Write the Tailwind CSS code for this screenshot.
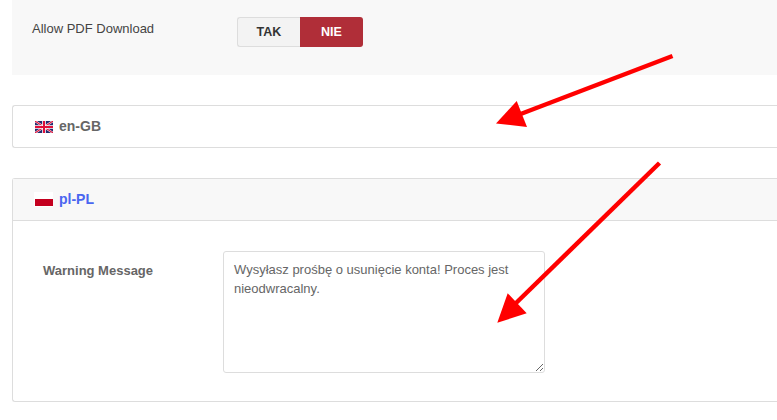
<!DOCTYPE html>
<html lang="en">
<head>
    <meta charset="UTF-8">
    <title>Document</title>
    <script src="https://cdn.jsdelivr.net/npm/@tailwindcss/browser@4"></script>
</head>
<body class="bg-white">
<div class="relative w-[777px] h-[420px] overflow-hidden pl-3 font-['Liberation_Sans',Arial,sans-serif] text-[#555]">

  <!-- Allow PDF -->
  <div class="w-[800px] h-[75px] bg-[#f8f8f8] flex items-start pl-5 pt-[17px]">
    <div class="w-[205px] text-[13px] leading-[23px] text-[#444]">Allow PDF Download</div>
    <div class="flex h-[30px] text-[12.5px] font-bold">
      <div class="w-[63px] flex items-center justify-center bg-[#f3f3f3] text-[#333] border border-[#ddd] border-r-0 rounded-l-[3px]">TAK</div>
      <div class="w-[63px] flex items-center justify-center bg-[#b02e38] text-white rounded-r-[3px]">NIE</div>
    </div>
  </div>

  <!-- en-GB -->
  <div class="mt-[30px] w-[800px] h-[43px] border border-[#ddd] border-r-0 rounded-[3px] flex items-center pl-[22px] text-[14px] font-bold text-[#666]">
    <svg class="w-[18px] h-[12px] mr-1.5 mt-px" viewBox="0 0 60 40">
      <rect width="60" height="40" fill="#23296e"/>
      <path d="M0 0L60 40M60 0L0 40" stroke="#fff" stroke-width="7"/>
      <path d="M0 0L60 40M60 0L0 40" stroke="#e0103a" stroke-width="3.5"/>
      <path d="M30 0V40M0 20H60" stroke="#fff" stroke-width="12"/>
      <path d="M30 0V40M0 20H60" stroke="#e0103a" stroke-width="6.67"/>
    </svg>
    <span>en-GB</span>
  </div>

  <!-- pl-PL -->
  <div class="mt-[30px] w-[800px] h-[224px] border border-[#ddd] border-r-0 rounded-[3px]">
    <div class="h-[42px] bg-[#f8f8f8] border-b border-[#ddd] flex items-center pl-[21px] text-[14px] font-bold text-[#4a66f0]">
      <svg class="w-[19px] h-[15px] mr-1.5" viewBox="0 0 19 15">
        <rect width="19" height="15" fill="#fff"/>
        <rect x="1" y="7" width="18" height="7" fill="#c4001f"/>
      </svg>
      <span>pl-PL</span>
    </div>
    <div class="flex pl-[30px] pt-[30px]">
      <div class="w-[180px] pt-[11px] text-[13px] leading-[18px] font-bold text-[#666]">Warning Message</div>
      <textarea class="w-[322px] h-[122px] border border-[#ddd] rounded-[3px] px-2.5 py-[8px] text-[13px] leading-[19px] text-[#666] outline-none">Wysyłasz prośbę o usunięcie konta! Proces jest nieodwracalny.</textarea>
    </div>
  </div>

  <!-- annotation arrows -->
  <svg class="absolute top-0 left-0 w-[777px] h-[420px] pointer-events-none" viewBox="0 0 777 420">
    <path d="M672.5 56L518 115" stroke="#ff0000" stroke-width="4.5" fill="none"/>
    <polygon points="496,123.5 516.7,101 527,127" fill="#ff0000"/>
    <path d="M659.5 163L514 305" stroke="#ff0000" stroke-width="4.5" fill="none"/>
    <polygon points="497.3,322.7 507.7,293.3 526.7,313.3" fill="#ff0000"/>
  </svg>
</div>
</body>
</html>
